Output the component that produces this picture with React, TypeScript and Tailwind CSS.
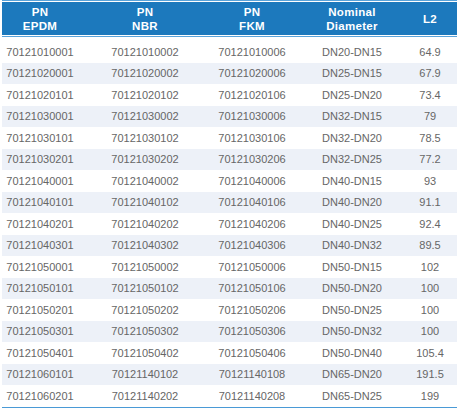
const rows: [string, string, string, string, string][] = [
  ['70121010001', '70121010002', '70121010006', 'DN20-DN15', '64.9'],
  ['70121020001', '70121020002', '70121020006', 'DN25-DN15', '67.9'],
  ['70121020101', '70121020102', '70121020106', 'DN25-DN20', '73.4'],
  ['70121030001', '70121030002', '70121030006', 'DN32-DN15', '79'],
  ['70121030101', '70121030102', '70121030106', 'DN32-DN20', '78.5'],
  ['70121030201', '70121030202', '70121030206', 'DN32-DN25', '77.2'],
  ['70121040001', '70121040002', '70121040006', 'DN40-DN15', '93'],
  ['70121040101', '70121040102', '70121040106', 'DN40-DN20', '91.1'],
  ['70121040201', '70121040202', '70121040206', 'DN40-DN25', '92.4'],
  ['70121040301', '70121040302', '70121040306', 'DN40-DN32', '89.5'],
  ['70121050001', '70121050002', '70121050006', 'DN50-DN15', '102'],
  ['70121050101', '70121050102', '70121050106', 'DN50-DN20', '100'],
  ['70121050201', '70121050202', '70121050206', 'DN50-DN25', '100'],
  ['70121050301', '70121050302', '70121050306', 'DN50-DN32', '100'],
  ['70121050401', '70121050402', '70121050406', 'DN50-DN40', '105.4'],
  ['70121060101', '70121140102', '70121140108', 'DN65-DN20', '191.5'],
  ['70121060201', '70121140202', '70121140208', 'DN65-DN25', '199'],
]

const cols = 'grid grid-cols-[76px_134px_80px_120px_36px]'

export default function App() {
  return (
    <div className="h-[408px] w-[459px] bg-white px-[2px] font-['Liberation_Sans',Arial,sans-serif]">
      {/* header */}
      <div className="border-t border-b border-[#5aa3da] py-px">
        <div className={`${cols} h-[33px] items-center bg-[#1c79bd] text-[11.5px] font-bold leading-[14px] tracking-[0.3px] text-white`}>
          <div className="text-center">PN<br />EPDM</div>
          <div className="text-center">PN<br />NBR</div>
          <div className="text-center">PN<br />FKM</div>
          <div className="text-center">Nominal<br />Diameter</div>
          <div className="text-center">L2</div>
        </div>
      </div>

      <div className="mt-1 border-b-2 border-[#4a9ad6]">
        {rows.map((r, i) => (
          <div
            key={r[0]}
            className={`${cols} h-[21.5px] items-center text-[11px] text-[#666] ${i % 2 ? 'bg-[#edf1f8]' : 'bg-white'}`}
          >
            {r.map((c, j) => (
              <div key={j} className="text-center">{c}</div>
            ))}
          </div>
        ))}
      </div>
    </div>
  )
}
